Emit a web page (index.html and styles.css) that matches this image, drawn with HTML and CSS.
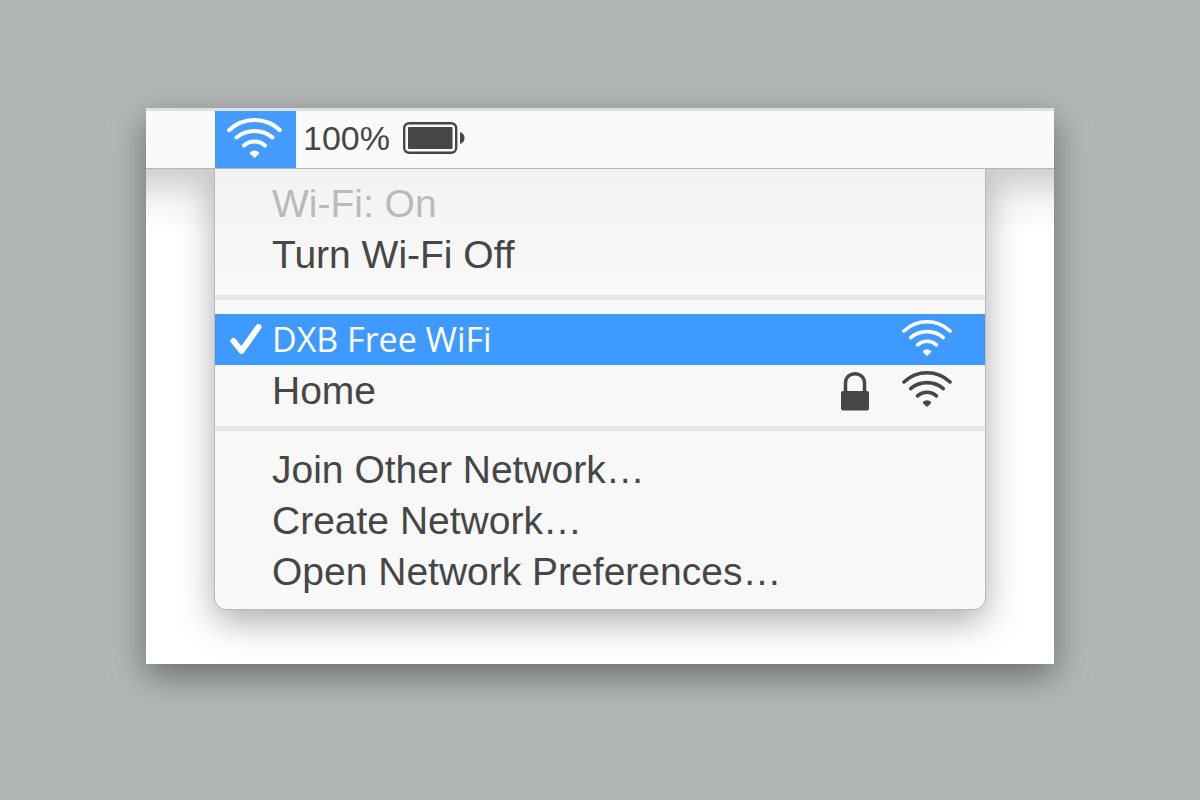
FILE: index.html
```html
<!DOCTYPE html>

<html lang="en">
<head>
    <meta charset="UTF-8"/>
    <meta name="viewport" content="width=device-width, initial-scale=1"/>
    <title>Wi-Fi</title>

    <link rel="stylesheet" href="styles.css">
</head>
<body>

<svg class="hidden">
    <symbol id="wifi" viewBox="0 0 57 42">
        <path d="M3 13.2A37 37 0 0 1 54 13.2M10.500 20.500A28 28 0 0 1 46.500 20.500M18 28.500A16 16 0 0 1 39 28.500"
              fill="none" stroke="currentColor" stroke-width="4" stroke-linecap="round"/>
        <path d="M24 35.2Q28.500 31.800 33 35.2Q33.500 37 31.500 38.2L28.500 41L25.500 38.2Q23.500 37 24 35.2Z" fill="currentColor"/>
    </symbol>
</svg>

<main class="screen">
    <header class="menubar">
        <button class="menubar-wifi" aria-label="Wi-Fi">
            <svg class="icon-wifi-big"><use href="#wifi"/></svg>
        </button>
        <div class="status">
            <span class="percent">100%</span>
            <svg class="icon-battery" viewBox="0 0 62 32">
                <rect x="1.2" y="1.2" width="52" height="29.600" rx="5" fill="none" stroke="currentColor" stroke-width="2.400"/>
                <rect x="5" y="5" width="44.500" height="22" rx="1" fill="currentColor"/>
                <path d="M57 10Q61.500 11.500 61.500 16T57 22Z" fill="currentColor"/>
            </svg>
        </div>
    </header>

    <nav class="menu">
        <div class="item disabled"><span class="label">Wi-Fi: On</span></div>
        <button class="item"><span class="label">Turn Wi-Fi Off</span></button>
        <hr class="first">
        <button class="item selected">
            <svg class="icon-check" viewBox="0 0 32 32"><path d="M3.500 17L11.500 27L28.500 3" fill="none" stroke="currentColor" stroke-width="6" stroke-linecap="round" stroke-linejoin="round"/></svg>
            <span class="label">DXB Free WiFi</span>
            <svg class="icon-wifi"><use href="#wifi"/></svg>
        </button>
        <button class="item">
            <span class="label">Home</span>
            <svg class="icon-lock" viewBox="0 0 30 40">
                <path d="M5.500 21V12C5.500 -0.500 24.500 -0.500 24.500 12V21" fill="none" stroke="currentColor" stroke-width="3.500"/>
                <rect x="1" y="20" width="28" height="19.500" rx="2" fill="currentColor"/>
            </svg>
            <svg class="icon-wifi"><use href="#wifi"/></svg>
        </button>
        <hr>
        <button class="item"><span class="label">Join Other Network…</span></button>
        <button class="item"><span class="label">Create Network…</span></button>
        <button class="item"><span class="label">Open Network Preferences…</span></button>
    </nav>
</main>

</body>
</html>
```
FILE: styles.css
```css
* {
    margin: 0;
    padding: 0;
    box-sizing: border-box;
}

body {
    font-family: "Liberation Sans", Arial, sans-serif;
    background: #b2b6b7;
    color: #464646;
    min-height: 100vh;
    padding: 108px 146px;
}

button {
    font: inherit;
    color: inherit;
    background: none;
    border: none;
    text-align: left;
    cursor: pointer;
}

svg {
    display: block;
    flex-shrink: 0;
}

.hidden {
    display: none;
}

.screen {
    background: linear-gradient(#d0d0d0 60px, #f4f4f4 96px, #fff 124px);
    padding-bottom: 55px;
    overflow: hidden;
    box-shadow: 0 12px 32px rgba(0, 0, 0, 0.4);
}

/* Top bar */
.menubar {
    position: relative;
    z-index: 1;
    display: flex;
    height: 61px;
    padding-left: 69px;
    background: #fafafa;
    border-top: 3px solid #dcdfe0;
    border-bottom: 1px solid #b8b8b8;
}

.menubar-wifi {
    display: flex;
    justify-content: center;
    align-items: center;
    width: 81px;
    height: 57px;
    padding: 0 3px 4px 0;
    background: #459cff;
    color: #fff;
}

.icon-wifi-big {
    width: 57px;
    height: 42px;
}

.status {
    display: flex;
    align-items: center;
    padding: 0 0 4px 7px;
}

.percent {
    margin-right: 13px;
    font-size: 34px;
    line-height: 40px;
}

.icon-battery {
    width: 62px;
    height: 32px;
}

/* Dropdown */
.menu {
    margin: 0 69px;
    padding: 9px 0 12px;
    background: linear-gradient(#f2f2f2, #f8f8f8 110px);
    border-radius: 0 0 12px 12px;
    box-shadow: 0 0 0 1px #bababa, 0 12px 36px rgba(0, 0, 0, 0.34);
}

.item {
    display: flex;
    align-items: center;
    width: 100%;
    height: 51px;
    padding: 0 32px 0 57px;
    font-size: 39px;
    line-height: 51px;
}

.label {
    flex: 1;
}

.disabled {
    color: #bababa;
}

.selected {
    padding-left: 15px;
    background: #3e9aff;
    color: #fff;
    font-family: "Open Sans", sans-serif;
    font-size: 34px;
}

.menu hr {
    height: 5px;
    border: none;
    background: #e6e6e6;
    margin: 10px 0 13px;
}

.menu hr.first {
    margin: 15px 0 14px;
}

.icon-check {
    width: 32px;
    height: 32px;
    margin-right: 10px;
}

.icon-wifi {
    width: 52px;
    height: 38px;
    margin-bottom: 3px;
}

.icon-lock {
    width: 30px;
    height: 40px;
    margin-right: 31px;
}
```
